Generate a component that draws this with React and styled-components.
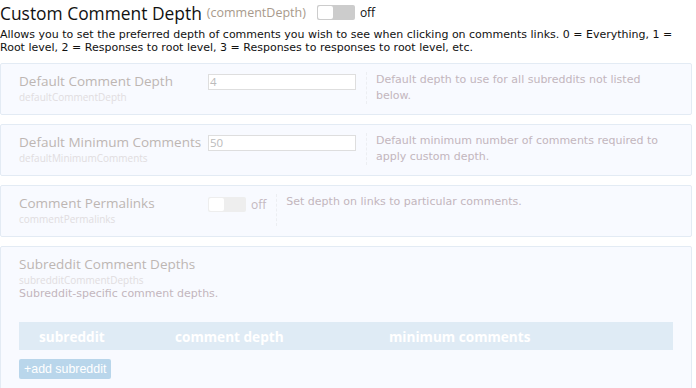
import styled, { createGlobalStyle } from "styled-components";

const GlobalStyle = createGlobalStyle`
  html, body {
    margin: 0;
    padding: 0;
    background: #fff;
  }
  body {
    font-family: "DejaVu Sans", Verdana, sans-serif;
    overflow: hidden;
  }
`;

const Page = styled.div`
  width: 692px;
  padding: 0;
`;

const Header = styled.div`
  display: flex;
  align-items: center;
  height: 25px;
`;

const Title = styled.span`
  font-family: "Open Sans", "Noto Sans", sans-serif;
  font-size: 17.4px;
  color: #111;
`;

const TitleKey = styled.span`
  font-family: "Open Sans", "Noto Sans", sans-serif;
  font-size: 12.5px;
  color: #a89a8c;
  margin-left: 5px;
`;

const Toggle = styled.span`
  display: inline-flex;
  width: 38px;
  height: 15px;
  border-radius: 2px;
  background: ${(p) => (p.faded ? "#eeeeee" : "#cccccc")};
  box-sizing: border-box;
  padding: 1px;
  margin-left: ${(p) => p.offset || 0}px;
`;

const Knob = styled.span`
  width: 15px;
  height: 13px;
  border-radius: 2px;
  background: #fff;
`;

const OffText = styled.span`
  font-family: "Open Sans", "Noto Sans", sans-serif;
  font-size: 12px;
  margin-left: 5px;
  color: ${(p) => (p.faded ? "#c4b8c0" : "#111")};
`;

const Intro = styled.p`
  margin: 3px 0 0;
  font-size: 11px;
  line-height: 13px;
  color: #111;
`;

const Panels = styled.div`
  display: flex;
  flex-direction: column;
  gap: 9px;
  margin-top: 9px;
`;

const Panel = styled.div`
  background: #f8faff;
  border: 1px solid #e3ebf4;
  border-radius: 2px;
  padding: 8px 0 10px 18px;
  display: flex;
  align-items: flex-start;
  min-height: ${(p) => p.minH || 32}px;
  flex-direction: ${(p) => (p.stack ? "column" : "row")};
`;

const LabelCol = styled.div`
  width: 189px;
  flex-shrink: 0;
  display: flex;
  flex-direction: column;
`;

const Label = styled.div`
  font-family: "Open Sans", "Noto Sans", sans-serif;
  font-size: 13.5px;
  line-height: 18px;
  color: #bdb6b3;
  white-space: nowrap;
`;

const Key = styled.div`
  font-family: "Open Sans", "Noto Sans", sans-serif;
  font-size: 10px;
  line-height: 14px;
  color: #e1dde0;
`;

const Control = styled.div`
  display: flex;
  align-items: center;
  padding-top: ${(p) => p.top || 0}px;
  flex-shrink: 0;
`;

const Input = styled.div`
  width: 148px;
  height: 16px;
  box-sizing: border-box;
  border: 1px solid #dedede;
  background: #fff;
  font-family: "Open Sans", "Noto Sans", sans-serif;
  font-size: 11.5px;
  line-height: 14px;
  color: #bbb;
  padding-left: 1px;
`;

const Desc = styled.div`
  margin-left: 10px;
  padding-left: 9px;
  border-left: 1px dashed #eceef2;
  font-size: 11px;
  line-height: 16px;
  color: #c3b6bd;
  width: 292px;
  min-height: 32px;
`;

const PlainDesc = styled.div`
  font-size: 11px;
  line-height: 14px;
  color: #c3b6bd;
`;

const Table = styled.div`
  margin-top: 21px;
  width: 654px;
  height: 28px;
  background: #dfebf5;
  display: grid;
  grid-template-columns: 136px 214px 1fr;
  align-items: center;
  padding-left: 20px;
  box-sizing: border-box;
`;

const HeadCell = styled.span`
  font-family: "Open Sans", "Noto Sans", sans-serif;
  font-weight: 700;
  font-size: 13.6px;
  color: #fff;
`;

const AddButton = styled.button`
  margin-top: 9px;
  height: 20px;
  padding: 0 5px;
  border: none;
  border-radius: 2px;
  background: #b9d6eb;
  color: #fff;
  font-family: "Liberation Sans", Arial, sans-serif;
  font-size: 12.4px;
`;

export default function App() {
  return (
    <Page>
      <GlobalStyle />
      <Header>
        <Title>Custom Comment Depth</Title>
        <TitleKey>(commentDepth)</TitleKey>
        <Toggle offset={11}>
          <Knob />
        </Toggle>
        <OffText>off</OffText>
      </Header>
      <Intro>
        Allows you to set the preferred depth of comments you wish to see when
        clicking on comments links. 0 = Everything, 1 = Root level, 2 =
        Responses to root level, 3 = Responses to responses to root level, etc.
      </Intro>
      <Panels>
        <Panel>
          <LabelCol>
            <Label>Default Comment Depth</Label>
            <Key>defaultCommentDepth</Key>
          </LabelCol>
          <Control top={2}>
            <Input>4</Input>
          </Control>
          <Desc>Default depth to use for all subreddits not listed below.</Desc>
        </Panel>
        <Panel>
          <LabelCol>
            <Label>Default Minimum Comments</Label>
            <Key>defaultMinimumComments</Key>
          </LabelCol>
          <Control top={2}>
            <Input>50</Input>
          </Control>
          <Desc>
            Default minimum number of comments required to apply custom depth.
          </Desc>
        </Panel>
        <Panel>
          <LabelCol>
            <Label>Comment Permalinks</Label>
            <Key>commentPermalinks</Key>
          </LabelCol>
          <Control top={2}>
            <Toggle faded>
              <Knob />
            </Toggle>
            <OffText faded>off</OffText>
          </Control>
          <Desc>Set depth on links to particular comments.</Desc>
        </Panel>
        <Panel stack minH={140}>
          <Label>Subreddit Comment Depths</Label>
          <Key>subredditCommentDepths</Key>
          <PlainDesc>Subreddit-specific comment depths.</PlainDesc>
          <Table>
            <HeadCell>subreddit</HeadCell>
            <HeadCell>comment depth</HeadCell>
            <HeadCell>minimum comments</HeadCell>
          </Table>
          <AddButton>+add subreddit</AddButton>
        </Panel>
      </Panels>
    </Page>
  );
}
